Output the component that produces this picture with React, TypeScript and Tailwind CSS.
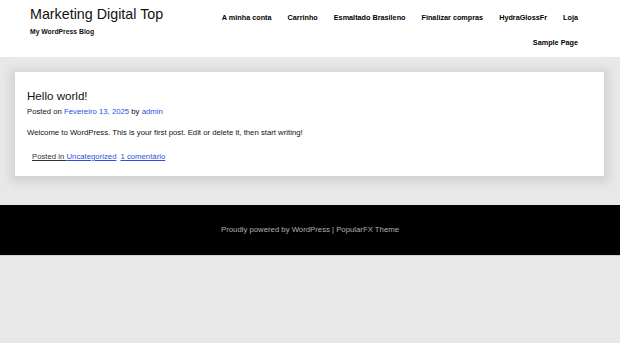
import React from "react";

const navRow = ["A minha conta", "Carrinho", "Esmaltado Brasileno", "Finalizar compras", "HydraGlossFr", "Loja", "Sample Page"];

export default function App() {
  return (
    <div className="min-h-[343px] bg-[#e8e8e8] font-['Liberation_Sans',Arial,sans-serif]">
      <header className="h-[57px] bg-white flex justify-between pl-[30px] pr-[42px]">
        <div className="pt-[6px]">
          <div className="text-[14.3px] leading-[17px] text-[#111]">Marketing Digital Top</div>
          <div className="mt-[4px] text-[6.8px] leading-[9px] font-bold text-[#111]">My WordPress Blog</div>
        </div>
        <nav className="w-[372px] pt-[7px] flex flex-wrap justify-end gap-x-[16px]">
          {navRow.map((n) => (
            <a key={n} className="text-[7.26px] leading-[21.5px] font-bold text-black">
              {n}
            </a>
          ))}
        </nav>
      </header>
      <main className="pt-[15px] pb-[29px] px-[15px] pr-[16px]">
        <article className="bg-white shadow-[0_2px_8px_5px_rgba(0,0,0,0.09)] pt-[16.5px] pb-[13px] px-[12px] rounded-[1px]">
          <h1 className="text-[11.6px] leading-[14px] text-[#111]">Hello world!</h1>
          <div className="mt-[3px] text-[7.75px] leading-[12px] text-[#111]">
            Posted on <a className="text-[#2a4fe6]">Fevereiro 13, 2025</a> by <a className="text-[#2a4fe6]">admin</a>
          </div>
          <p className="mt-[9px] text-[7.75px] leading-[12px] text-[#111]">
            Welcome to WordPress. This is your first post. Edit or delete it, then start writing!
          </p>
          <div className="mt-[12.5px] pl-[5px] text-[7.75px] leading-[12px] text-[#333]">
            <span className="underline">Posted in </span>
            <a className="underline text-[#2a4fe6]">Uncategorized</a>
            <span className="ml-[4px]" />
            <a className="underline text-[#2a4fe6]">1 comentário</a>
          </div>
        </article>
      </main>
      <footer className="h-[51px] bg-black border-b border-[#cfcfcf] flex items-center justify-center">
        <span className="text-[7.75px] text-[#b0b0b0]">Proudly powered by WordPress | PopularFX Theme</span>
      </footer>
    </div>
  );
}
